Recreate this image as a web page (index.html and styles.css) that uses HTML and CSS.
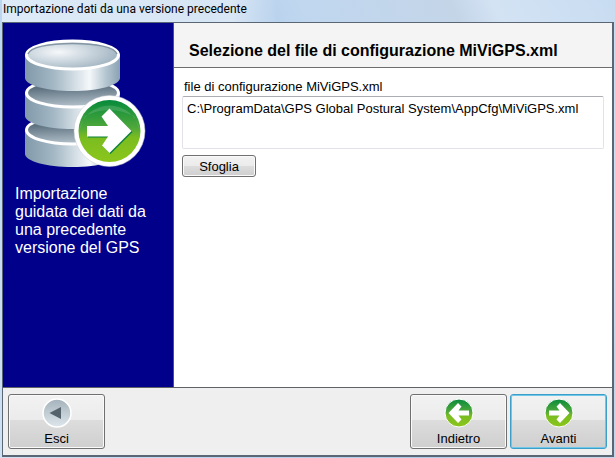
FILE: index.html
```html
<!DOCTYPE html>
<html lang="it">
<head>
    <meta charset="UTF-8">
    <meta name="viewport" content="width=device-width, initial-scale=1.0">
    <title>Importazione dati da una versione precedente</title>
    <link rel="stylesheet" href="styles.css">
</head>
<body>
    <div class="titlebar">Importazione dati da una versione precedente</div>
    <form class="window">
        <div class="content">
            <aside class="sidebar">
                <svg class="logo" width="122" height="130" viewBox="0 0 122 130" aria-hidden="true">
                    <defs>
                        <linearGradient id="side" x1="0" x2="1" y1="0" y2="0">
                            <stop offset="0" stop-color="#8199aa"/>
                            <stop offset="0.3" stop-color="#a3b7c4"/>
                            <stop offset="0.68" stop-color="#f4f8fa"/>
                            <stop offset="0.85" stop-color="#b5c6d1"/>
                            <stop offset="1" stop-color="#8ba2b2"/>
                        </linearGradient>
                        <radialGradient id="lid" cx="0.35" cy="0.4" r="0.65">
                            <stop offset="0" stop-color="#f6f8fa"/>
                            <stop offset="0.5" stop-color="#ccd7df"/>
                            <stop offset="1" stop-color="#a4b6c3"/>
                        </radialGradient>
                        <linearGradient id="shade" x1="0.4" x2="0.5" y1="0.3" y2="1">
                            <stop offset="0" stop-color="#5f7280"/>
                            <stop offset="0.5" stop-color="#8a9ba7"/>
                            <stop offset="1" stop-color="#b4c2cc"/>
                        </linearGradient>
                        <linearGradient id="green" x1="0" x2="0" y1="0" y2="1">
                            <stop offset="0" stop-color="#078a3c"/>
                            <stop offset="0.45" stop-color="#4fa83a"/>
                            <stop offset="0.6" stop-color="#7abc20"/>
                            <stop offset="1" stop-color="#8cc61c"/>
                        </linearGradient>
                    </defs>
                    <path d="M1 91V115C1 122 22 128 48.500 128S96 122 96 115V91Z" fill="url(#side)"/>
                    <ellipse cx="48.500" cy="91" rx="46" ry="14" fill="url(#shade)" stroke="#fff" stroke-width="3"/>
                    <path d="M1 54V77C1 84 22 90 48.500 90S96 84 96 77V54Z" fill="url(#side)"/>
                    <ellipse cx="48.500" cy="54" rx="46" ry="14" fill="url(#shade)" stroke="#fff" stroke-width="3"/>
                    <path d="M1 16V39C1 46 22 52 48.500 52S96 46 96 39V16Z" fill="url(#side)"/>
                    <ellipse cx="48.500" cy="16" rx="46" ry="14" fill="url(#lid)" stroke="#fff" stroke-width="3"/>
                    <path d="M4 15C6 8 25 4.500 48.500 4.500S91 8 93 15" fill="none" stroke="#8496a3" stroke-width="1.500"/>
                    <circle cx="85.500" cy="92" r="35.500" fill="#fff" stroke="#c9ccd2" stroke-width="0.500"/>
                    <circle cx="85.500" cy="92" r="31" fill="url(#green)"/>
                    <path d="M55 92A31 31 0 0 1 116 92L110 77Q85 65 61 77Z" fill="#fff" opacity="0.140"/>
                    <path d="M63 87H84L77.500 77.500 85.500 69.500 107.500 92 85.500 114 78 106.500 84 97.500H63Z" fill="#0b8039" transform="translate(1 1)"/>
                    <path d="M63 87H84L77.500 77.500 85.500 69.500 107.500 92 85.500 114 78 106.500 84 97.500H63Z" fill="#fff"/>
                </svg>
                <p class="intro">Importazione guidata dei dati da una precedente versione del GPS</p>
            </aside>
            <main class="page">
                <h1 class="page-title">Selezione del file di configurazione MiViGPS.xml</h1>
                <div class="fields">
                    <label for="config-file">file di configurazione MiViGPS.xml</label>
                    <textarea id="config-file" class="path" spellcheck="false">C:\ProgramData\GPS Global Postural System\AppCfg\MiViGPS.xml</textarea>
                    <button type="button" class="browse">Sfoglia</button>
                </div>
            </main>
        </div>
        <footer class="nav">
            <button type="button" class="nav-button exit">
                <svg width="30" height="30" viewBox="0 0 30 30" aria-hidden="true">
                    <defs>
                        <linearGradient id="grey" x1="0" x2="0" y1="0" y2="1">
                            <stop offset="0" stop-color="#a5b2bb"/>
                            <stop offset="1" stop-color="#dde6eb"/>
                        </linearGradient>
                    </defs>
                    <circle cx="15" cy="15" r="14" fill="url(#grey)" stroke="#fff" stroke-width="1.500"/>
                    <path d="M7.500 15L19 9V21Z" fill="#53626b"/>
                </svg>
                Esci
            </button>
            <button type="button" class="nav-button">
                <svg width="30" height="30" viewBox="0 0 30 30" aria-hidden="true">
                    <circle cx="15" cy="15" r="14" fill="url(#green)" stroke="#fff" stroke-width="1"/>
                    <path d="M4.500 15L14 5 17.500 8.500 14.500 12.500H25V17.500H14.500L17.500 21.500 14 25Z" fill="#fff"/>
                </svg>
                Indietro
            </button>
            <button type="button" class="nav-button next">
                <svg width="30" height="30" viewBox="0 0 30 30" aria-hidden="true">
                    <circle cx="15" cy="15" r="14" fill="url(#green)" stroke="#fff" stroke-width="1"/>
                    <path d="M25.500 15L16 5 12.500 8.500 15.500 12.500H5V17.500H15.500L12.500 21.500 16 25Z" fill="#fff"/>
                </svg>
                Avanti
            </button>
        </footer>
    </form>
</body>
</html>
```
FILE: styles.css
```css
* {
    box-sizing: border-box;
}
body {
    margin: 0;
    padding: 0 1px 1px 2px;
    min-height: 100vh;
    display: flex;
    flex-direction: column;
    font-family: "Liberation Sans", Arial, sans-serif;
    font-size: 13px;
    color: #000;
    background: linear-gradient(65deg, #cfe2f5 0%, #b9d3ee 30%, #aecbea 50%, #c0d7ef 62%, #c4d5e8 80%, #d3e3f4 85%, #c8dcf1 100%);
}
.titlebar {
    height: 22px;
    padding-left: 1px;
    line-height: 18px;
    font-family: "Segoe UI", Roboto, sans-serif;
    font-size: 12px;
    white-space: nowrap;
    background: linear-gradient(90deg, rgba(255, 255, 255, 0.5) 0, rgba(255, 255, 255, 0.5) 230px, rgba(255, 255, 255, 0) 275px);
}
.window {
    flex: 1;
    display: flex;
    flex-direction: column;
    border: 1px solid #5a6673;
    border-right-width: 2px;
    border-bottom-width: 2px;
}
.content {
    flex: 1;
    display: flex;
    background: #fff;
}
.sidebar {
    flex: none;
    width: 171px;
    padding: 16px 12px 0;
    color: #fff;
    background: #00008b;
    border-right: 1px solid #4a4a96;
}
.logo {
    display: block;
    margin-left: 9px;
}
.intro {
    margin: 16px 0 0;
    font-size: 16px;
    line-height: 18px;
}
.page {
    flex: 1;
    min-width: 0;
}
.page-title {
    margin: 0;
    padding: 12px 15px 0;
    height: 45px;
    font-size: 16px;
    line-height: 32px;
    white-space: nowrap;
    background: #f4f4f4;
    border-bottom: 1px solid #6e6e6e;
}
.fields {
    display: flex;
    flex-direction: column;
    align-items: flex-start;
    padding: 10px 8px;
}
.fields label {
    padding-left: 2px;
    line-height: 18px;
}
.path {
    width: 100%;
    height: 53px;
    padding: 3px 4px;
    font: inherit;
    line-height: 18px;
    resize: none;
    border: 1px solid #e2e3ea;
    border-top-color: #abadb3;
    border-radius: 2px;
    outline: none;
    overflow: hidden;
}
.browse {
    width: 74px;
    height: 22px;
    margin-top: 6px;
    padding: 0;
    font: inherit;
    color: #000;
    background: linear-gradient(#f2f2f2 0%, #ebebeb 50%, #dddddd 50%, #cfcfcf 100%);
    border: 1px solid #707070;
    border-radius: 3px;
    box-shadow: inset 0 0 0 1px #fafafa;
}
.nav {
    display: flex;
    gap: 3px;
    padding: 6px 5px;
    background: #efefef;
    border-top: 1px solid #5f6368;
}
.nav-button {
    display: flex;
    flex-direction: column;
    align-items: center;
    gap: 2px;
    width: 97px;
    height: 55px;
    padding: 3px 0 0;
    font: inherit;
    line-height: 18px;
    color: #000;
    background: linear-gradient(#f2f2f2 0%, #ebebeb 47%, #dddddd 47%, #cfcfcf 100%);
    border: 1px solid #707070;
    border-radius: 3px;
    box-shadow: inset 0 0 0 1px #fafafa;
}
.exit {
    margin-right: auto;
}
.next {
    border-color: #3c9fc9;
    box-shadow: inset 0 0 0 1px #6fc8e8;
}
```
